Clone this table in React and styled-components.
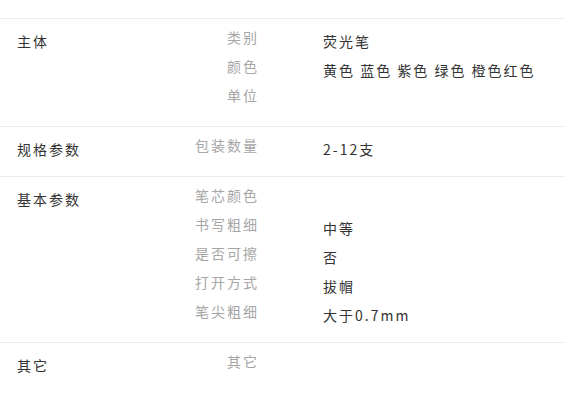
import React from 'react'
import styled, { createGlobalStyle } from 'styled-components'

const GlobalStyle = createGlobalStyle`
  html, body {
    margin: 0;
    padding: 0;
    background: #fff;
  }
  body {
    font-family: "Noto Sans CJK SC", "Noto Sans", sans-serif;
    font-size: 14px;
    color: #333;
  }
`

const StyledSpecs = styled.div`
  padding-top: 18px;
  width: 565px;
`

const Group = styled.section`
  display: flex;
  align-items: flex-start;
  border-top: 1px solid #ececec;
  padding: 9px 0 20px 17px;
`

// sits 3px lower than the keys, like the values do
const GroupTitle = styled.div`
  width: 141px;
  flex-shrink: 0;
  line-height: 20px;
  padding-top: 3px;
  margin-bottom: -3px;
  letter-spacing: 2px;
  color: #333;
`

const Rows = styled.div`
  display: flex;
  flex-direction: column;
  gap: 9px;
`

const Row = styled.div`
  display: flex;
  align-items: flex-start;
  height: 20px;
`

const Key = styled.div`
  width: 101px;
  flex-shrink: 0;
  text-align: right;
  line-height: 20px;
  margin-top: -1px;
  letter-spacing: 2px;
  color: #a6a6a6;
`

const Value = styled.div`
  margin-left: 64px;
  line-height: 20px;
  padding-top: 3px;
  letter-spacing: 2px;
  color: #333;
  white-space: nowrap;
`

const groups = [
  {
    title: '主体',
    rows: [
      ['类别', '荧光笔'],
      ['颜色', '黄色 蓝色 紫色 绿色 橙色红色'],
      ['单位', ''],
    ],
  },
  {
    title: '规格参数',
    rows: [['包装数量', '2-12支']],
  },
  {
    title: '基本参数',
    rows: [
      ['笔芯颜色', ''],
      ['书写粗细', '中等'],
      ['是否可擦', '否'],
      ['打开方式', '拔帽'],
      ['笔尖粗细', '大于0.7mm'],
    ],
  },
  {
    title: '其它',
    rows: [['其它', '']],
  },
]

const App = () => {
  return (
    <>
      <GlobalStyle />
      <StyledSpecs>
        {groups.map(group => (
          <Group key={group.title}>
            <GroupTitle>{group.title}</GroupTitle>
            <Rows>
              {group.rows.map(([k, v]) => (
                <Row key={k}>
                  <Key>{k}</Key>
                  <Value>{v}</Value>
                </Row>
              ))}
            </Rows>
          </Group>
        ))}
      </StyledSpecs>
    </>
  )
}

export default App
